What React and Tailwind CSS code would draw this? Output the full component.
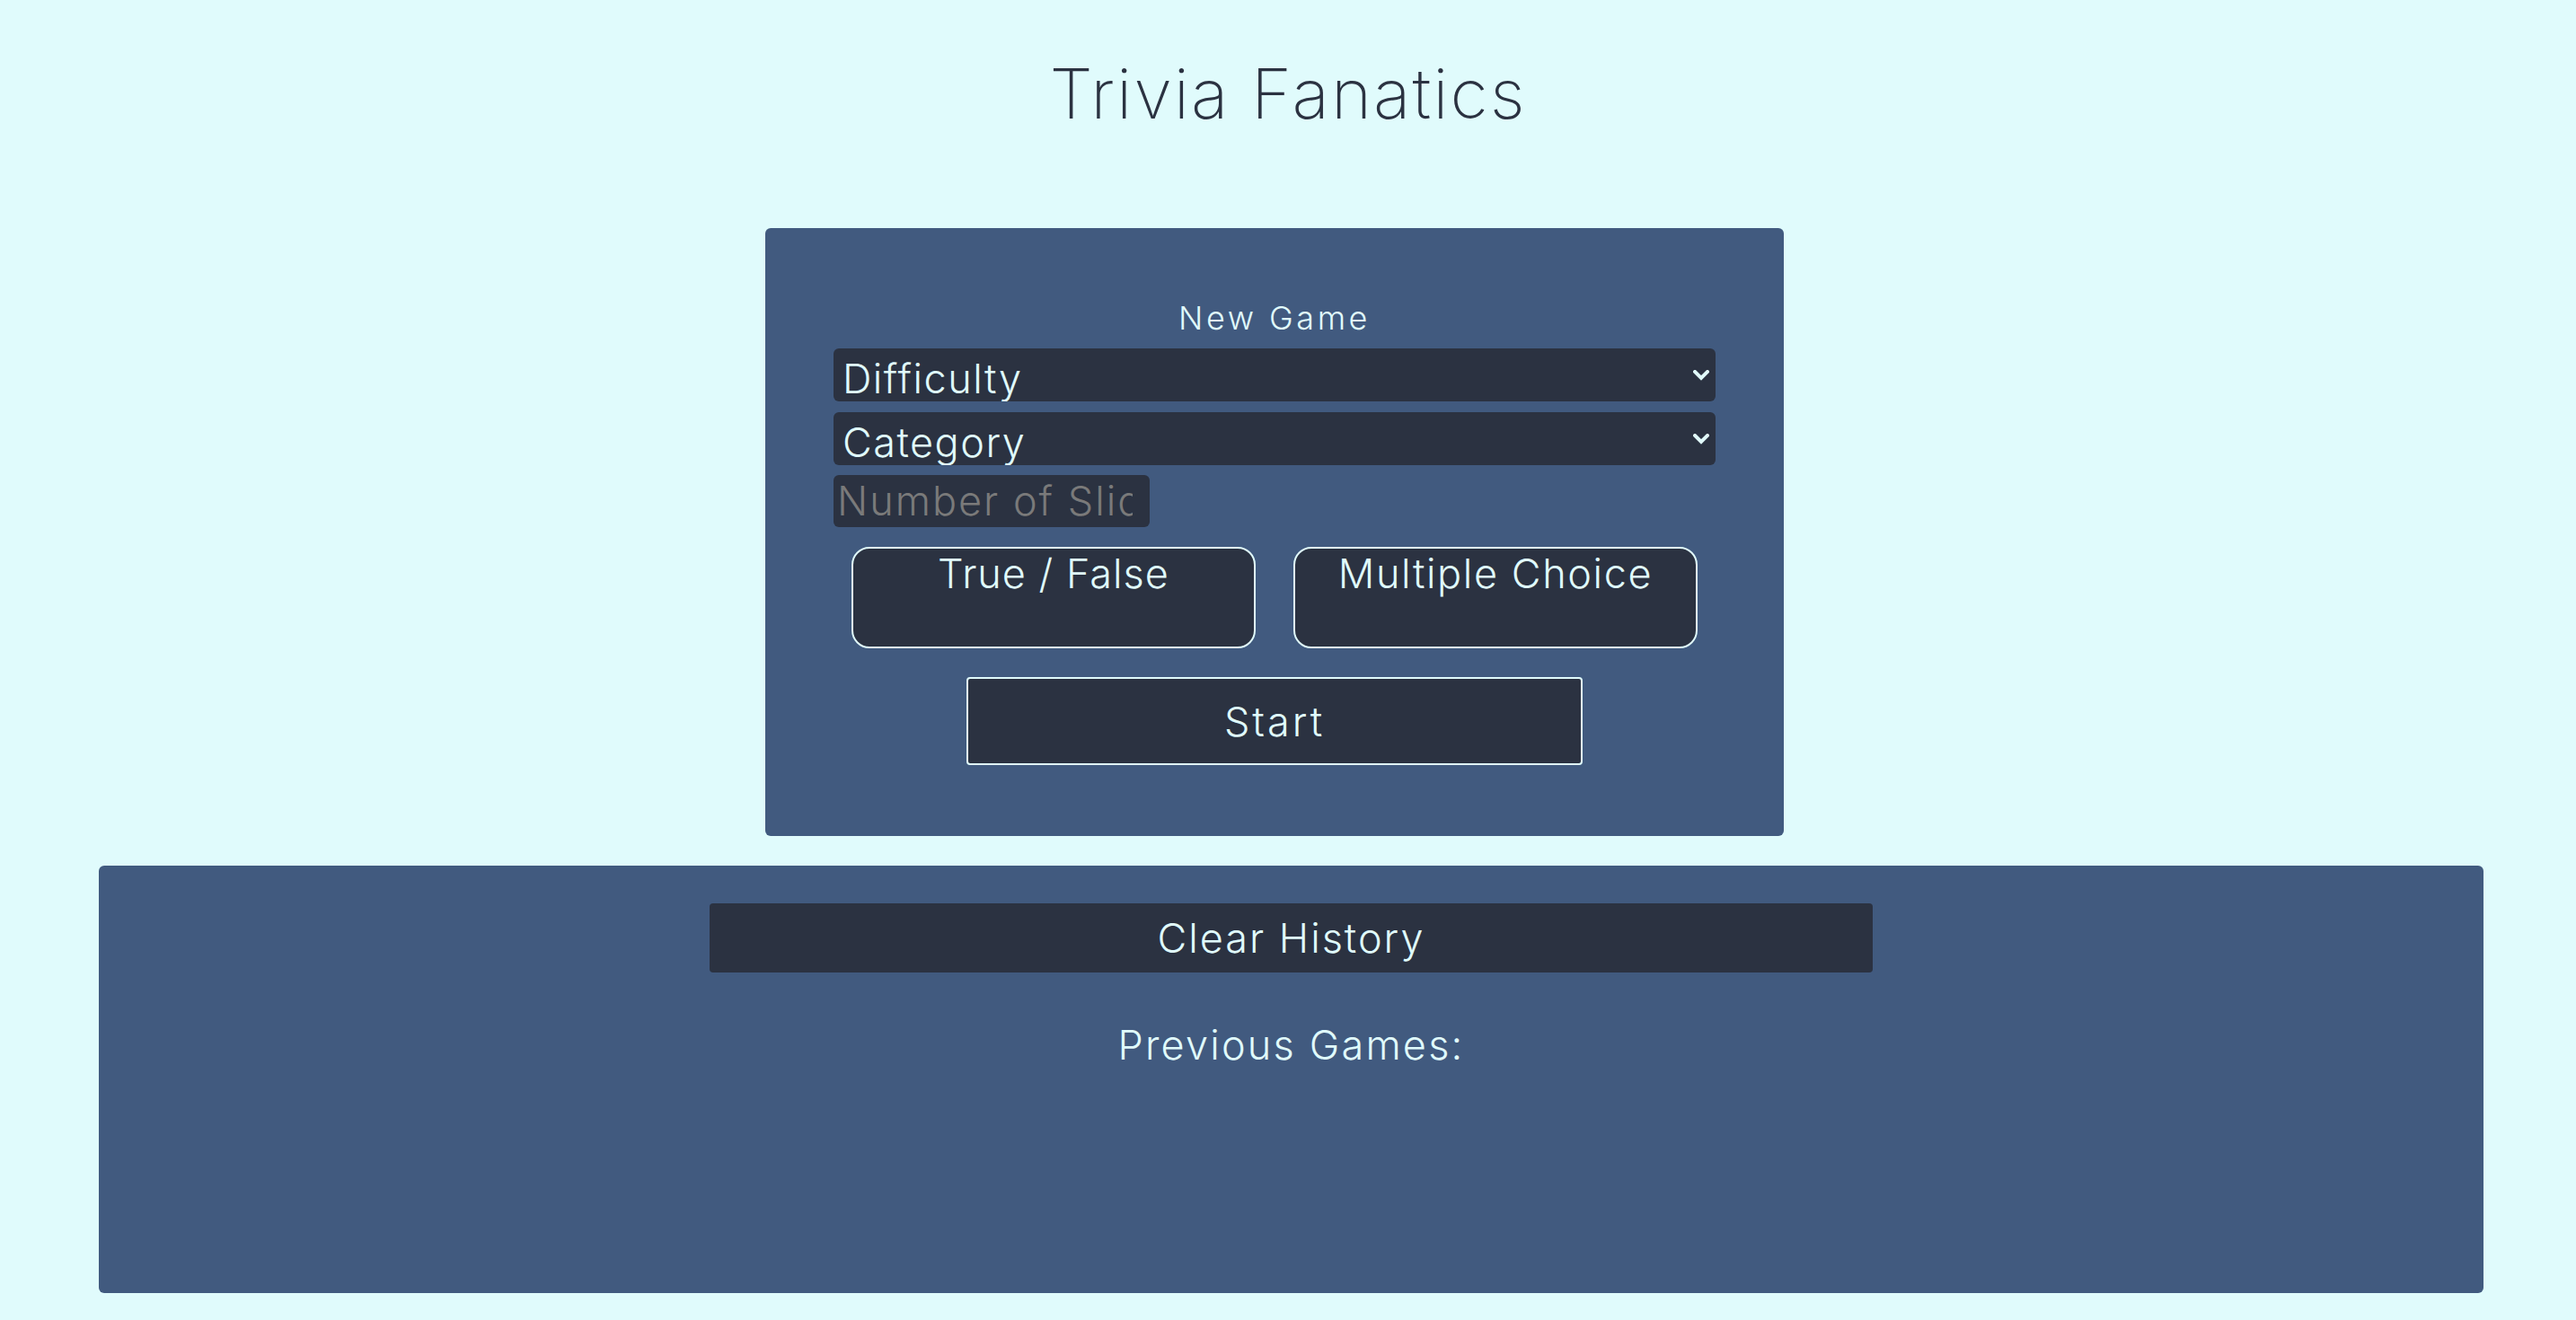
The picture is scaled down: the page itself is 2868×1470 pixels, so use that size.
import { useState } from "react";

const font = { fontFamily: "Inter, 'Noto Sans', sans-serif" };

function Chevron() {
  return (
    <svg className="pointer-events-none absolute right-[7px] top-1/2 -translate-y-1/2" width="18" height="12" viewBox="0 0 18 12" fill="none">
      <polyline points="2,2 9,9 16,2" stroke="#e0fbfc" strokeWidth="4" strokeLinecap="square" />
    </svg>
  );
}

function Select({ value, onChange, options }) {
  return (
    <div className="relative">
      <select
        value={value}
        onChange={(e) => onChange(e.target.value)}
        className="block h-[59px] w-full appearance-none rounded-[6px] bg-[#2b3241] py-0 pl-[10px] pr-[32px] text-[45px] font-light leading-normal tracking-[1.5px] text-[#e0fbfc] outline-none"
        style={font}
      >
        {options.map((o) => (
          <option key={o} value={o}>{o}</option>
        ))}
      </select>
      <Chevron />
    </div>
  );
}

export default function App() {
  const [difficulty, setDifficulty] = useState("Difficulty");
  const [category, setCategory] = useState("Category");
  const [slides, setSlides] = useState("");
  const [type, setType] = useState("");
  const [history, setHistory] = useState([]);

  const startGame = () => {
    setHistory([...history, { difficulty, category, slides, type }]);
  };

  return (
    <div className="min-h-screen bg-[#e0fbfc] pb-[30px] pt-[66px]" style={font}>
      <h1 className="text-center text-[77px] font-extralight leading-none tracking-[2px] text-[#2b3241]">Trivia Fanatics</h1>

      <div className="mt-[111px] flex justify-center pr-[30px]">
        <div className="w-[1134px] rounded-[6px] bg-[#415a7f] px-[76px] pb-[79px] pt-[82px]">
          <h2 className="text-center text-[36px] font-light leading-none tracking-[3.5px] text-[#e0fbfc]">New Game</h2>
          <div className="mt-[16px]">
            <Select value={difficulty} onChange={setDifficulty} options={["Difficulty", "Easy", "Medium", "Hard"]} />
          </div>
          <div className="mt-[12px]">
            <Select value={category} onChange={setCategory} options={["Category", "General Knowledge", "Science", "History"]} />
          </div>
          <input
            type="number"
            value={slides}
            onChange={(e) => setSlides(e.target.value)}
            placeholder="Number of Slides"
            className="mt-[11px] block h-[58px] w-[352px] rounded-[6px] bg-[#2b3241] px-[4px] text-[45px] font-light leading-normal tracking-[2px] text-[#e0fbfc] outline-none placeholder:text-[#7a7a7a]"
          />
          <div className="mt-[22px] flex gap-[42px] px-[20px]">
            <button
              onClick={() => setType("boolean")}
              className="flex h-[113px] flex-1 items-start justify-center rounded-[20px] border-2 border-[#e0fbfc] bg-[#2b3241] pt-[5px] text-[45px] font-light leading-none tracking-[1px] text-[#e0fbfc]"
            >
              True / False
            </button>
            <button
              onClick={() => setType("multiple")}
              className="flex h-[113px] flex-1 items-start justify-center rounded-[20px] border-2 border-[#e0fbfc] bg-[#2b3241] pt-[5px] text-[45px] font-light leading-none tracking-[1.6px] text-[#e0fbfc]"
            >
              Multiple Choice
            </button>
          </div>
          <div className="mt-[32px] flex justify-center">
            <button
              onClick={startGame}
              className="h-[98px] w-[686px] rounded-[4px] border-2 border-[#e0fbfc] bg-[#2b3241] text-[45px] font-light leading-none tracking-[3px] text-[#e0fbfc]"
            >
              Start
            </button>
          </div>
        </div>
      </div>

      <div className="ml-[110px] mr-[103px] mt-[33px] h-[476px] rounded-[6px] bg-[#415a7f] pt-[42px]">
        <div className="flex justify-center">
          <button
            onClick={() => setHistory([])}
            className="h-[77px] w-[1295px] rounded-[4px] bg-[#2b3241] text-[45px] font-light leading-none tracking-[2px] text-[#e0fbfc]"
          >
            Clear History
          </button>
        </div>
        <h3 className="mt-[58px] text-center text-[45px] font-light leading-none tracking-[2.2px] text-[#e0fbfc]">Previous Games:</h3>
        {history.map((g, i) => (
          <p key={i} className="mt-4 text-center text-[30px] font-light text-[#e0fbfc]">
            {g.difficulty} · {g.category} · {g.type}
          </p>
        ))}
      </div>
    </div>
  );
}
